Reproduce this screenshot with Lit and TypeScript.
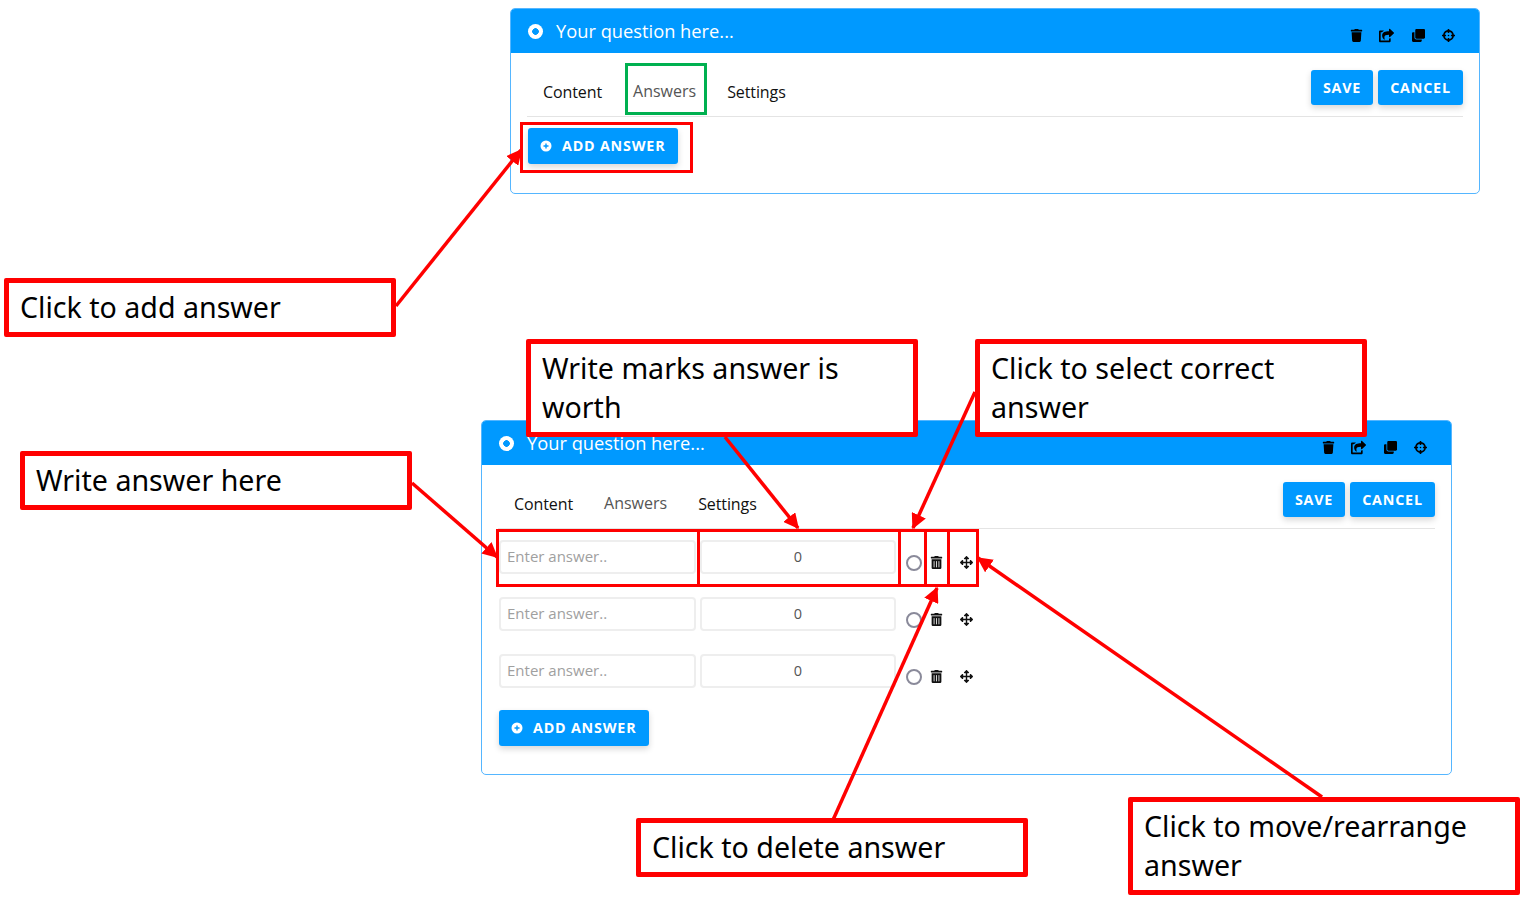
import { LitElement, html, css, svg } from 'lit';
import { customElement, property } from 'lit/decorators.js';

const ICONS = {
  trash:
    'M32 464a48 48 0 0 0 48 48h288a48 48 0 0 0 48-48V128H32zm272-256a16 16 0 0 1 32 0v224a16 16 0 0 1-32 0zm-96 0a16 16 0 0 1 32 0v224a16 16 0 0 1-32 0zm-96 0a16 16 0 0 1 32 0v224a16 16 0 0 1-32 0zM432 32H312l-9.4-18.7A24 24 0 0 0 281.1 0H166.8a23.72 23.72 0 0 0-21.4 13.3L136 32H16A16 16 0 0 0 0 48v32a16 16 0 0 0 16 16h416a16 16 0 0 0 16-16V48a16 16 0 0 0-16-16z',
  trashSolid:
    'M432 32H312l-9.4-18.7A24 24 0 0 0 281.1 0H166.8a23.72 23.72 0 0 0-21.4 13.3L136 32H16A16 16 0 0 0 0 48v32a16 16 0 0 0 16 16h416a16 16 0 0 0 16-16V48a16 16 0 0 0-16-16zM53.2 467a48 48 0 0 0 47.9 45h245.8a48 48 0 0 0 47.9-45L416 128H32z',
  share:
    'M568.482 177.448L424.479 313.433C409.3 327.768 384 317.14 384 295.985v-71.963c-144.575.97-205.566 35.113-164.775 171.353 4.483 14.973-12.846 26.567-25.006 17.33C155.252 383.105 120 326.488 120 269.339c0-143.937 117.599-172.5 264-173.312V24.012c0-21.174 25.317-31.768 40.479-17.448l144.003 135.988c10.02 9.463 10.028 25.425 0 34.896zM384 379.128V448H64V128h50.916a11.99 11.99 0 0 0 8.648-3.693c14.953-15.568 32.237-27.89 51.014-37.676C186.708 80.284 182.218 64 168.027 64H48C21.49 64 0 85.49 0 112v352c0 26.51 21.49 48 48 48h352c26.51 0 48-21.49 48-48v-88.806c0-8.288-8.197-14.066-16.011-11.302-10.954 3.874-22.7 5.375-34.284 3.63-5.848-.873-11.705 3.55-11.705 9.606z',
  clone:
    'M464 0c26.51 0 48 21.49 48 48v288c0 26.51-21.49 48-48 48H176c-26.51 0-48-21.49-48-48V48c0-26.51 21.49-48 48-48h288M176 416c-44.112 0-80-35.888-80-80V128H48c-26.51 0-48 21.49-48 48v288c0 26.51 21.49 48 48 48h288c26.51 0 48-21.49 48-48v-48H176z',
  crosshairs:
    'M500 224h-30.364C455.724 130.325 381.675 56.276 288 42.364V12c0-6.627-5.373-12-12-12h-40c-6.627 0-12 5.373-12 12v30.364C130.325 56.276 56.276 130.325 42.364 224H12c-6.627 0-12 5.373-12 12v40c0 6.627 5.373 12 12 12h30.364C56.276 381.675 130.325 455.724 224 469.636V500c0 6.627 5.373 12 12 12h40c6.627 0 12-5.373 12-12v-30.364C381.675 455.724 455.724 381.675 469.636 288H500c6.627 0 12-5.373 12-12v-40c0-6.627-5.373-12-12-12zM288 404.634V364c0-6.627-5.373-12-12-12h-40c-6.627 0-12 5.373-12 12v40.634C165.826 392.232 119.783 346.243 107.366 288H148c6.627 0 12-5.373 12-12v-40c0-6.627-5.373-12-12-12h-40.634C119.768 165.826 165.757 119.783 224 107.366V148c0 6.627 5.373 12 12 12h40c6.627 0 12-5.373 12-12v-40.634C346.174 119.768 392.217 165.757 404.634 224H364c-6.627 0-12 5.373-12 12v40c0 6.627 5.373 12 12 12h40.634C392.232 346.174 346.243 392.217 288 404.634zM288 256c0 17.673-14.327 32-32 32s-32-14.327-32-32c0-17.673 14.327-32 32-32s32 14.327 32 32z',
  move:
    'M352.201 425.775l-79.196 79.196c-9.373 9.373-24.568 9.373-33.941 0l-79.196-79.196c-15.119-15.119-4.411-40.971 16.971-40.97h51.162L228 284H127.196v51.162c0 21.382-25.851 32.09-40.971 16.971L7.029 272.937c-9.373-9.373-9.373-24.569 0-33.941L86.225 159.8c15.119-15.119 40.971-4.411 40.971 16.971V228H228V127.196h-51.23c-21.382 0-32.09-25.851-16.971-40.971l79.196-79.196c9.373-9.373 24.568-9.373 33.941 0l79.196 79.196c15.119 15.119 4.411 40.971-16.971 40.971h-51.162V228h100.804v-51.162c0-21.382 25.851-32.09 40.97-16.971l79.196 79.196c9.373 9.373 9.373 24.569 0 33.941L425.773 352.2c-15.119 15.119-40.971 4.411-40.97-16.971V284H284v100.804h51.23c21.382 0 32.09 25.851 16.971 40.971z',
};

const icon = (d: string, w = 512, size = 13) => html`
  <svg class="icon" width=${size} height=${size} viewBox="0 0 ${w} 512">
    ${svg`<path d=${d} fill="currentColor"></path>`}
  </svg>
`;

@customElement('quiz-panel')
export class QuizPanel extends LitElement {
  @property({ type: Number }) rows = 0;

  static styles = css`
    :host {
      display: block;
      box-sizing: border-box;
      height: 100%;
      border: 1px solid #55b6ff;
      border-radius: 5px;
      background: #fff;
      font-family: 'Open Sans', sans-serif;
      overflow: hidden;
    }

    .head {
      display: flex;
      align-items: center;
      height: 44px;
      padding: 0 24px 0 17px;
      background: #0099ff;
      color: #fff;
    }

    .dot {
      width: 15px;
      height: 15px;
      border-radius: 50%;
      background: radial-gradient(circle, #0099ff 0 3px, #fff 3.6px);
    }

    .title {
      flex: 1;
      margin-left: 13px;
      font-size: 18.3px;
      line-height: 44px;
    }

    .tools {
      display: flex;
      align-items: center;
      gap: 17px;
      padding-top: 8px;
      color: #000;
    }

    .tools svg:nth-child(1) {
      margin-right: -1px;
    }

    .tools svg:nth-child(2) {
      margin-right: 1px;
    }

    .body {
      padding: 0 16px;
    }

    .tabbar {
      display: flex;
      align-items: flex-start;
      height: 64px;
      border-bottom: 1px solid #e4e4e4;
      box-sizing: border-box;
    }

    .tab {
      margin-top: 28px;
      font-size: 16px;
      line-height: 22px;
      color: #111;
      margin-left: 16px;
      margin-right: 14px;
      letter-spacing: -0.1px;
    }

    .tab.on {
      margin-left: 17px;
      margin-right: 15px;
      margin-top: 27px;
      letter-spacing: 0;
      color: #555;
    }

    .tabbar .actions {
      display: flex;
      gap: 5px;
      margin-left: auto;
      margin-top: 17px;
    }

    .btn {
      display: flex;
      align-items: center;
      justify-content: center;
      box-sizing: border-box;
      height: 35px;
      border-radius: 3px;
      background: #0099ff;
      color: #fff;
      font-size: 14.3px;
      font-weight: 700;
      letter-spacing: 0.8px;
      box-shadow: 0 3px 6px rgba(0, 0, 0, 0.16);
    }

    .save {
      width: 62px;
    }

    .cancel {
      width: 85px;
    }

    .add {
      justify-content: flex-start;
      width: 150px;
      height: 36px;
      gap: 10px;
      margin-left: 1px;
      padding: 0 0 2px 12px;
    }

    .plus {
      width: 12px;
      height: 12px;
      margin-top: 2px;
      color: #fff;
    }

    .list {
      display: flex;
      flex-direction: column;
      gap: 23px;
      padding-top: 11px;
      margin-left: 1px;
    }

    .row {
      display: flex;
      align-items: flex-start;
      height: 34px;
    }

    .field {
      box-sizing: border-box;
      width: 197px;
      height: 34px;
      margin-right: 4px;
      padding-left: 6px;
      border: 2px solid #eee;
      border-radius: 4px;
      font-size: 15px;
      line-height: 29px;
      color: #a0a0a0;
    }

    .field.num {
      width: 196px;
      padding-left: 0;
      text-align: center;
      color: #555;
      font-size: 14.5px;
    }

    .radio {
      box-sizing: border-box;
      width: 16px;
      height: 16px;
      margin: 15px 0 0 6px;
      border: 2px solid #8a8a9a;
      border-radius: 50%;
    }

    .trash {
      margin: 16px 0 0 8px;
      color: #111;
    }

    .grip {
      margin: 16px 0 0 17px;
      color: #111;
    }

    .icon {
      display: block;
    }

    .foot {
      padding-top: 22px;
    }

    .only {
      padding-top: 11px;
    }
  `;

  render() {
    const rows = Array.from({ length: this.rows });
    return html`
      <div class="head">
        <div class="dot"></div>
        <div class="title">Your question here...</div>
        <div class="tools">
          ${icon(ICONS.trashSolid, 448)} ${icon(ICONS.share, 576, 15)}
          ${icon(ICONS.clone)} ${icon(ICONS.crosshairs)}
        </div>
      </div>
      <div class="body">
        <div class="tabbar">
          <div class="tab">Content</div>
          <div class="tab on">Answers</div>
          <div class="tab">Settings</div>
          <div class="actions">
            <div class="btn save">SAVE</div>
            <div class="btn cancel">CANCEL</div>
          </div>
        </div>
        ${rows.length
          ? html`<div class="list">
              ${rows.map(
                () => html`
                  <div class="row">
                    <div class="field">Enter answer..</div>
                    <div class="field num">0</div>
                    <div class="radio"></div>
                    <div class="trash">${icon(ICONS.trash, 448)}</div>
                    <div class="grip">${icon(ICONS.move, 512, 13)}</div>
                  </div>
                `
              )}
            </div>`
          : ''}
        <div class=${rows.length ? 'foot' : 'only'}>
          <div class="btn add">
            <svg class="plus" viewBox="0 0 12 12">
              <circle cx="6" cy="6" r="5.5" fill="#fff"></circle>
              <path d="M3.5 6h5M6 3.5v5" stroke="#0099ff" stroke-width="1.4"></path>
            </svg>
            ADD ANSWER
          </div>
        </div>
      </div>
    `;
  }
}

const PANELS = [
  { x: 510, y: 8, w: 970, h: 186, rows: 0 },
  { x: 481, y: 420, w: 971, h: 355, rows: 3 },
];

// annotation boxes painted over the panels: x, y, w, h, colour
const MARKS = [
  [520, 122, 173, 51, '#ff0000'],
  [625, 63, 82, 52, '#00b050'],
  [496, 529, 204, 58, '#ff0000'],
  [697, 529, 204, 58, '#ff0000'],
  [898, 529, 29, 58, '#ff0000'],
  [924, 529, 26, 58, '#ff0000'],
  [947, 529, 32, 58, '#ff0000'],
];

const CALLOUTS = [
  { x: 4, y: 278, h: 59, text: 'Click to add answer' },
  { x: 20, y: 451, h: 59, text: 'Write answer here' },
  { x: 526, y: 339, h: 98, text: 'Write marks answer is worth' },
  { x: 975, y: 339, h: 98, text: 'Click to select correct answer' },
  { x: 636, y: 818, h: 59, text: 'Click to delete answer' },
  { x: 1128, y: 797, h: 98, text: 'Click to move/rearrange answer' },
];

const ARROWS = [
  [396, 306, 521, 150],
  [412, 483, 497, 557],
  [725, 437, 798, 528],
  [975, 392, 913, 528],
  [833, 820, 937, 588],
  [1322, 797, 978, 558],
];

@customElement('app-root')
export class AppRoot extends LitElement {
  static styles = css`
    :host {
      display: block;
      position: relative;
      width: 1520px;
      height: 905px;
      overflow: hidden;
      background: #fff;
    }

    .panel,
    .mark,
    .callout,
    .arrows {
      position: absolute;
    }

    .mark {
      box-sizing: border-box;
      border: 3px solid;
    }

    .arrows {
      left: 0;
      top: 0;
    }

    .callout {
      box-sizing: border-box;
      width: 392px;
      padding: 4px 11px;
      border: 5px solid #ff0000;
      border-radius: 2px;
      background: #fff;
      color: #000;
      font-family: 'Noto Sans', sans-serif;
      font-size: 28.6px;
      line-height: 39px;
    }
  `;

  render() {
    return html`
      ${PANELS.map(
        p => html`
          <quiz-panel
            class="panel"
            style="left:${p.x}px;top:${p.y}px;width:${p.w}px;height:${p.h}px"
            .rows=${p.rows}
          ></quiz-panel>
        `
      )}
      ${MARKS.map(
        ([x, y, w, h, color]) => html`
          <div
            class="mark"
            style="left:${x}px;top:${y}px;width:${w}px;height:${h}px;color:${color}"
          ></div>
        `
      )}
      <svg class="arrows" width="1520" height="905">
        <defs>
          <marker id="tip" markerWidth="4.4" markerHeight="4.4" refX="4" refY="2.2" orient="auto">
            <path d="M0 0L4.4 2.2L0 4.4z" fill="#ff0000"></path>
          </marker>
        </defs>
        ${ARROWS.map(
          ([x1, y1, x2, y2]) => svg`
            <line x1=${x1} y1=${y1} x2=${x2} y2=${y2} stroke="#ff0000" stroke-width="3.5" marker-end="url(#tip)"></line>
          `
        )}
      </svg>
      ${CALLOUTS.map(
        c => html`
          <div class="callout" style="left:${c.x}px;top:${c.y}px;height:${c.h}px">${c.text}</div>
        `
      )}
    `;
  }
}
